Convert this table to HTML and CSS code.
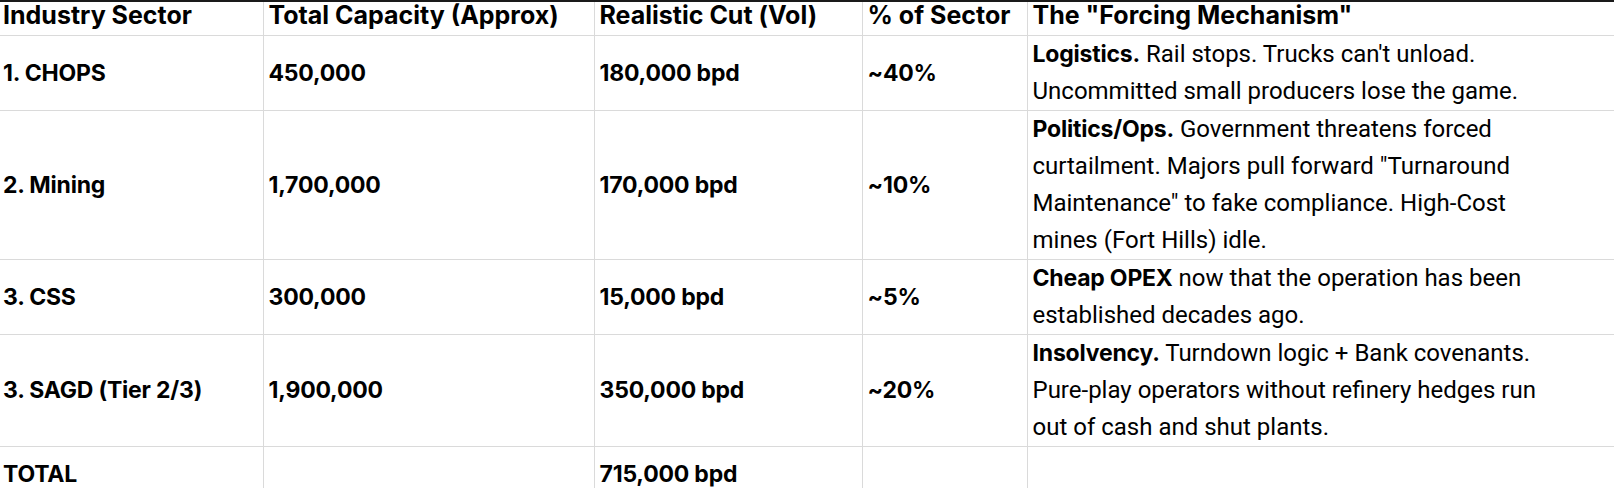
FILE: index.html
```html
<!DOCTYPE html>
<html lang="en">
<head>
<meta charset="utf-8">
<title>Forcing Mechanism</title>
<link rel="stylesheet" href="styles.css">
</head>
<body>
<table class="sheet">
  <colgroup>
    <col class="c1"><col class="c2"><col class="c3"><col class="c4"><col class="c5">
  </colgroup>
  <thead>
    <tr>
      <th class="first">Industry Sector</th>
      <th>Total Capacity (Approx)</th>
      <th>Realistic Cut (Vol)</th>
      <th>% of Sector</th>
      <th>The "Forcing Mechanism"</th>
    </tr>
  </thead>
  <tbody>
    <tr>
      <td class="first num">1. CHOPS</td>
      <td class="num">450,000</td>
      <td class="num">180,000 bpd</td>
      <td class="num">~40%</td>
      <td class="note"><b>Logistics.</b> Rail stops. Trucks can't unload.<br>Uncommitted small producers lose the game.</td>
    </tr>
    <tr>
      <td class="first num">2. Mining</td>
      <td class="num">1,700,000</td>
      <td class="num">170,000 bpd</td>
      <td class="num">~10%</td>
      <td class="note"><b>Politics/Ops.</b> Government threatens forced<br>curtailment. Majors pull forward "Turnaround<br>Maintenance" to fake compliance. High-Cost<br>mines (Fort Hills) idle.</td>
    </tr>
    <tr>
      <td class="first num">3. CSS</td>
      <td class="num">300,000</td>
      <td class="num">15,000 bpd</td>
      <td class="num">~5%</td>
      <td class="note"><b>Cheap OPEX</b> now that the operation has been<br>established decades ago.</td>
    </tr>
    <tr>
      <td class="first num">3. SAGD (Tier 2/3)</td>
      <td class="num">1,900,000</td>
      <td class="num">350,000 bpd</td>
      <td class="num">~20%</td>
      <td class="note"><b>Insolvency.</b> Turndown logic + Bank covenants.<br>Pure-play operators without refinery hedges run<br>out of cash and shut plants.</td>
    </tr>
    <tr class="total">
      <td class="first num">TOTAL</td>
      <td class="num"></td>
      <td class="num">715,000 bpd</td>
      <td class="num"></td>
      <td class="note"></td>
    </tr>
  </tbody>
</table>
</body>
</html>
```

FILE: styles.css
```css
html, body {
  margin: 0;
  padding: 0;
  background: #ffffff;
  overflow: hidden;
}

.sheet {
  border-collapse: collapse;
  table-layout: fixed;
  width: 1614px;
  font-family: Roboto, "Liberation Sans", sans-serif;
  font-size: 24px;
  color: #000000;
  border-top: 2px solid #1a1a1a;
}

.c1 { width: 263px; }
.c2 { width: 331px; }
.c3 { width: 268px; }
.c4 { width: 165px; }
.c5 { width: 587px; }

.sheet th,
.sheet td {
  border: 1px solid #dadada;
  padding: 0 5px;
  text-align: left;
  white-space: nowrap;
  overflow: hidden;
}

.sheet th {
  font-family: Inter, Roboto, sans-serif;
  font-weight: 700;
  font-size: 25px;
  letter-spacing: 0;
  line-height: 27px;
  padding-bottom: 6px;
  vertical-align: top;
  border-top: none;
}

.sheet td {
  line-height: 37px;
  vertical-align: middle;
}

.sheet .total td {
  line-height: 54px;
  border-bottom: none;
}

.sheet .first {
  border-left: none;
  padding-left: 3px;
}

.sheet td:last-child,
.sheet th:last-child {
  border-right: none;
}

.num {
  font-family: Inter, Roboto, sans-serif;
  font-weight: 700;
  font-size: 23px;
  letter-spacing: -0.2px;
}

.note {
  font-weight: 400;
  vertical-align: top;
}

.note b {
  font-family: Inter, Roboto, sans-serif;
  font-size: 23px;
  font-weight: 700;
  letter-spacing: -0.2px;
}
```
